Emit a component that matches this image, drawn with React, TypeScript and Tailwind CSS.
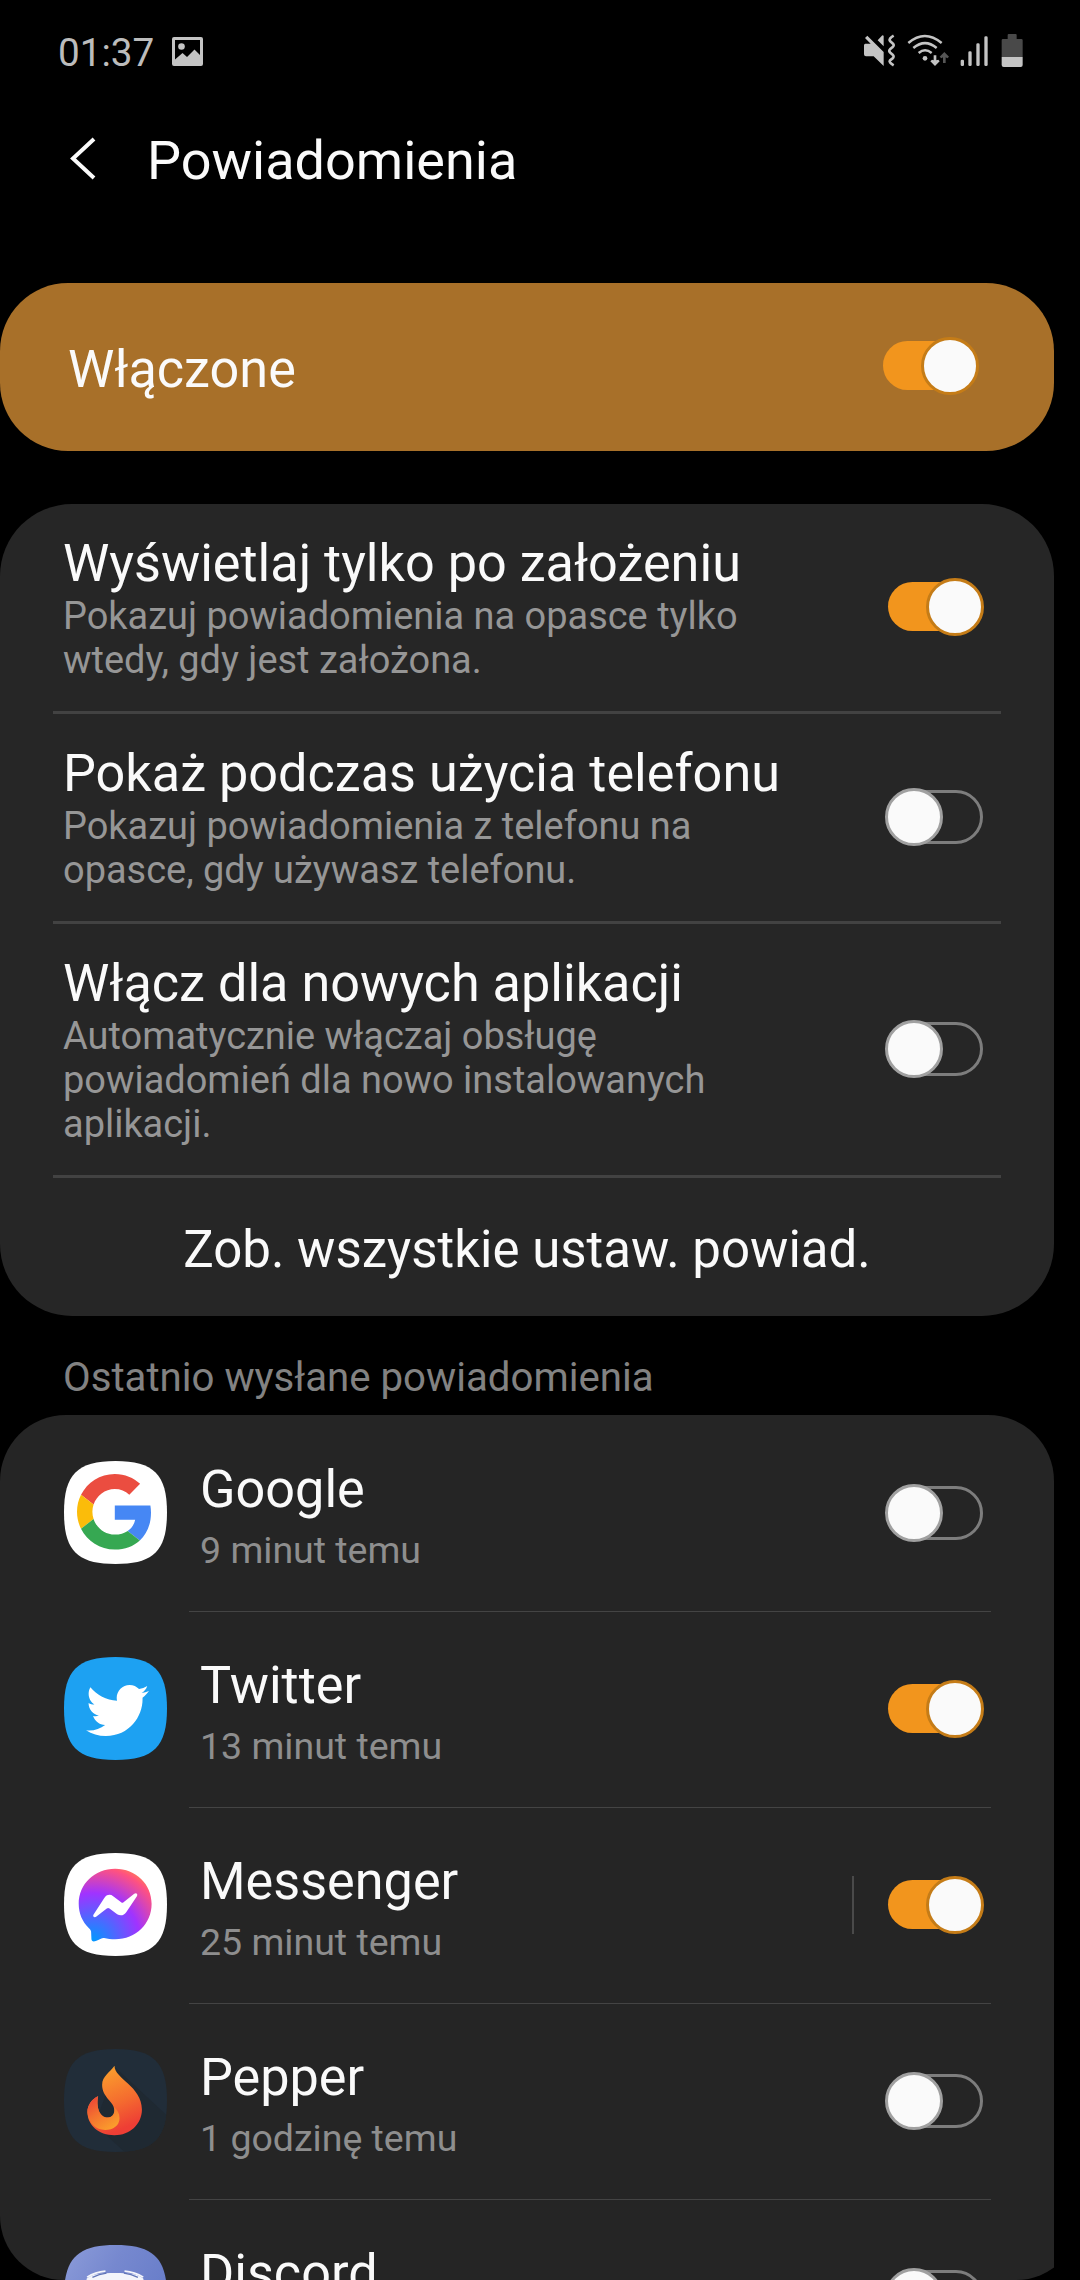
import React from "react";
import { FaTwitter } from "react-icons/fa";

const SQUIRCLE = "M50 0C87 0 100 13 100 50C100 87 87 100 50 100C13 100 0 87 0 50C0 13 13 0 50 0Z";

function Toggle({ on }: { on: boolean }) {
  return on ? (
    <div className="relative h-[58px] w-[96px] shrink-0">
      <div className="absolute left-0 top-1 h-[49px] w-[92px] rounded-full bg-[#f2951d]" />
      <div className="absolute right-0 top-0 size-[58px] rounded-full border-[3px] border-[#c57c17] bg-[#fafafa]" />
    </div>
  ) : (
    <div className="relative mr-px h-[58px] w-[98px] shrink-0">
      <div className="absolute right-0 top-[2px] h-[54px] w-[92px] rounded-full border-[3px] border-[#7d7d7d]" />
      <div className="absolute left-0 top-0 size-[58px] rounded-full border-[3px] border-[#a0a0a0] bg-[#fafafa]" />
    </div>
  );
}

function StatusBar() {
  return (
    <header className="flex h-[104px] items-start pl-[58px] pr-[57px] text-[#bcbcbc]">
      <span className="mt-[30px] w-[96px] text-[38.700px] leading-[46px]">01:37</span>
      <svg className="ml-[18px] mt-[37px] h-[29px] w-[31px]" viewBox="0 0 31 29" fill="#c4c4c4">
        <path
          fillRule="evenodd"
          d="M2 0H29Q31 0 31 2V27Q31 29 29 29H2Q0 29 0 27V2Q0 0 2 0ZM3 3V22.5L10.500 16L15 20L22.500 12.500L28 18V3Z"
        />
        <circle cx="9.500" cy="9.500" r="3.300" />
      </svg>
      <svg className="ml-auto mt-[34px] h-[33px] w-[159px]" viewBox="133 72 477 99" fill="#c4c4c4" stroke="none">
        <path d="M137 101H153L136 84L143 77L192 126V168L162 139H139Q133 139 133 133V106Q133 101 137 101ZM192 77V109L174 91L188 76Z" />
        <path
          d="M222 77Q206 86 211 93L220 101Q225 107 218 112L211 118Q206 123 212 128L219 134Q225 140 218 146L211 151Q206 157 222 166"
          fill="none"
          stroke="#c4c4c4"
          strokeWidth="8"
          strokeLinejoin="round"
        />
        <g fill="none" stroke="#c4c4c4" strokeWidth="7.500" strokeLinecap="butt">
          <path d="M266 99Q315 57 366 99" />
          <path d="M281 114Q316 85 351 114" />
          <path d="M297 129Q316 113 336 129" />
        </g>
        <circle cx="316" cy="145" r="7" />
        <path d="M342 136H350V151L356 149L360 154L346 168L332 154L337 149L342 151Z" />
        <path fill="#555" d="M374 126L388 140L383 145L378 142V159H370V142L365 145L360 140Z" />
        <rect x="423" y="149" width="10" height="19" rx="4" />
        <rect x="446" y="124" width="10" height="44" rx="4" />
        <rect x="470" y="100" width="10" height="68" rx="4" />
        <rect x="494" y="79" width="10" height="89" rx="4" />
        <path fill="#494949" d="M564 75Q564 72 567 72H588Q591 72 591 75V87H605Q609 87 609 91V141H546V91Q546 87 550 87H564Z" />
        <path d="M546 141H609V165Q609 171 603 171H552Q546 171 546 165Z" />
      </svg>
    </header>
  );
}

function GoogleIcon() {
  return (
    <svg className="size-[103px]" viewBox="0 0 103 103">
      <path transform="scale(1.03)" d={SQUIRCLE} fill="#fff" />
      <g transform="translate(13 13) scale(1.575)">
        <path fill="#eb4d40" d="M24 9.500c3.540 0 6.710 1.220 9.210 3.600l6.850-6.850C35.900 2.380 30.470 0 24 0 14.620 0 6.510 5.380 2.560 13.220l7.980 6.190C12.430 13.720 17.740 9.500 24 9.500z" />
        <path fill="#4687f4" d="M46.980 24.550c0-1.570-.15-3.090-.38-4.550H24v9.020h12.940c-.58 2.960-2.260 5.480-4.780 7.180l7.730 6c4.510-4.180 7.090-10.360 7.090-17.650z" />
        <path fill="#fbbc0a" d="M10.530 28.590c-.48-1.450-.76-2.990-.76-4.590s.27-3.140.76-4.590l-7.980-6.190C.92 16.460 0 20.120 0 24c0 3.880.92 7.540 2.560 10.780l7.970-6.190z" />
        <path fill="#36a852" d="M24 48c6.480 0 11.930-2.130 15.890-5.810l-7.730-6c-2.150 1.450-4.920 2.300-8.160 2.300-6.260 0-11.570-4.220-13.470-9.910l-7.980 6.190C6.510 42.620 14.620 48 24 48z" />
      </g>
    </svg>
  );
}

function TwitterIcon() {
  return (
    <div className="relative size-[103px]">
      <svg className="size-[103px]" viewBox="0 0 100 100">
        <path d={SQUIRCLE} fill="#1da1f2" />
      </svg>
      <FaTwitter className="absolute left-[22px] top-[22px] size-[63px] text-white" />
    </div>
  );
}

function MessengerIcon() {
  return (
    <svg className="size-[103px]" viewBox="73 39 308 308">
      <defs>
        <radialGradient id="messenger" cx="0.19" cy="0.99" r="1.09">
          <stop offset="0" stopColor="#0099ff" />
          <stop offset="0.6" stopColor="#a033ff" />
          <stop offset="0.93" stopColor="#ff5280" />
          <stop offset="1" stopColor="#ff7061" />
        </radialGradient>
      </defs>
      <path transform="translate(73 39) scale(3.08)" d={SQUIRCLE} fill="#fff" />
      <path
        fill="url(#messenger)"
        d="M226 86C288 86 335 132 335 191C335 251 288 297 226 297C214 297 203 295 193 293C187 292 180 297 168 302C161 305 155 303 155 296L154 274C153 268 150 266 147 263C128 245 117 220 117 191C117 132 164 86 226 86Z"
      />
      <path
        fill="#fff"
        d="M161 224L193 174C199 164 211 161 220 168L244 186C246 188 249 188 251 186L283 161C289 156 295 162 291 168L259 216C253 226 241 228 232 222L209 205C206 203 204 203 201 205L169 230C164 233 158 229 161 224Z"
      />
    </svg>
  );
}

function PepperIcon() {
  return (
    <svg className="size-[103px]" viewBox="73 627 308 308">
      <defs>
        <linearGradient id="flame" x1="0.35" y1="0" x2="0.7" y2="1">
          <stop offset="0" stopColor="#fba22c" />
          <stop offset="0.55" stopColor="#f46a2f" />
          <stop offset="0.9" stopColor="#ee3e35" />
        </linearGradient>
        <linearGradient id="curl" x1="0.1" y1="0" x2="0.75" y2="1">
          <stop offset="0" stopColor="#e93f38" />
          <stop offset="0.45" stopColor="#f4702f" />
          <stop offset="1" stopColor="#fba02c" />
        </linearGradient>
        <clipPath id="pepperTile">
          <path transform="translate(73 627) scale(3.08)" d={SQUIRCLE} />
        </clipPath>
      </defs>
      <g clipPath="url(#pepperTile)">
        <path d="M73 627H381V935H73Z" fill="#212d39" />
        <path d="M228 684L381 826V935H254L165 852Z" fill="#1f2932" />
      </g>
      <path
        fill="url(#flame)"
        d="M224 677C224 716 306 738 306 808C306 852 270 885 224 885C176 885 143 855 143 815C143 793 158 775 175 768C169 796 177 832 204 832C216 832 226 823 224 808C220 782 187 772 187 734C187 708 211 696 224 677Z"
      />
      <path
        fill="url(#curl)"
        d="M175 768C169 796 177 832 204 832C218 832 227 820 222 800C233 810 239 820 239 834C239 856 220 869 196 869C168 869 147 850 143 817C142 794 158 775 175 768Z"
      />
    </svg>
  );
}

function DiscordIcon() {
  return (
    <svg className="size-[103px]" viewBox="73 1215 308 308">
      <defs>
        <linearGradient id="discord" x1="0" y1="0" x2="1" y2="0.6">
          <stop offset="0" stopColor="#8c9cd9" />
          <stop offset="0.45" stopColor="#7688cf" />
          <stop offset="1" stopColor="#657bc8" />
        </linearGradient>
      </defs>
      <path transform="translate(73 1215) scale(3.08)" d={SQUIRCLE} fill="url(#discord)" />
      <path fill="#f3f5fb" d="M141 1315C160 1301 186 1299 226 1299C266 1299 292 1301 310 1315L330 1420L280 1450H175L125 1420Z" />
      <path d="M142 1311Q166 1296 197 1293M310 1311Q285 1296 254 1293" stroke="#f3f5fb" strokeWidth="5" fill="none" />
      <path d="M158 1312Q178 1302 200 1299M294 1312Q274 1302 252 1299" stroke="#6176b8" strokeWidth="4" fill="none" />
    </svg>
  );
}

const settings = [
  { title: "Wyświetlaj tylko po założeniu", lines: ["Pokazuj powiadomienia na opasce tylko", "wtedy, gdy jest założona."], on: true },
  { title: "Pokaż podczas użycia telefonu", lines: ["Pokazuj powiadomienia z telefonu na", "opasce, gdy używasz telefonu."], on: false },
  { title: "Włącz dla nowych aplikacji", lines: ["Automatycznie włączaj obsługę", "powiadomień dla nowo instalowanych", "aplikacji."], on: false },
];

const apps = [
  { name: "Google", time: "9 minut temu", on: false, Icon: GoogleIcon },
  { name: "Twitter", time: "13 minut temu", on: true, Icon: TwitterIcon },
  { name: "Messenger", time: "25 minut temu", on: true, split: true, Icon: MessengerIcon },
  { name: "Pepper", time: "1 godzinę temu", on: false, Icon: PepperIcon },
  { name: "Discord", on: false, Icon: DiscordIcon },
];

export default function App() {
  return (
    <div className="flex h-[2280px] w-[1080px] flex-col overflow-hidden bg-black font-['Roboto',sans-serif] text-[52.200px] leading-[60px] text-[#fafafa]">
      <StatusBar />
      <div className="flex h-[179px] items-start">
        <svg className="ml-[70px] mt-[33px] h-[43px] w-[26px]" viewBox="0 0 26 43" fill="none" stroke="#fafafa" strokeWidth="4">
          <path d="M24 2L3 21.500L24 41" />
        </svg>
        <h1 className="ml-[51px] mt-[25px] text-[54px] leading-[64px]">Powiadomienia</h1>
      </div>

      <section className="flex h-[168px] w-[1054px] shrink-0 items-start rounded-[68px] bg-[#a87029] pl-[68px] pr-[75px]">
        <span className="mt-[57px] flex-1">Włączone</span>
        <div className="mt-[54px]">
          <Toggle on />
        </div>
      </section>

      <section className="mt-[53px] h-[812px] w-[1054px] shrink-0 rounded-[72px] bg-[#262626]">
        {settings.map((s) => (
          <React.Fragment key={s.title}>
            <div className="flex items-center pb-[29px] pl-[63px] pr-[70px] pt-[30px]">
              <div className="flex-1 whitespace-nowrap">
                <h2>{s.title}</h2>
                <p className="text-[37.950px] leading-[44px] text-[#969696]">
                  {s.lines.map((l) => (
                    <span key={l} className="block">{l}</span>
                  ))}
                </p>
              </div>
              <div className="-mt-[3px]">
                <Toggle on={s.on} />
              </div>
            </div>
            <div className="mx-[53px] h-[3px] bg-[#424242]" />
          </React.Fragment>
        ))}
        <div className="pt-[42px] text-center text-[51px]">Zob. wszystkie ustaw. powiad.</div>
      </section>

      <div className="h-[99px] shrink-0 pl-[63px] pt-[39px] text-[40.200px] leading-[46px] text-[#828282]">
        Ostatnio wysłane powiadomienia
      </div>

      <section className="h-[865px] w-[1054px] shrink-0 overflow-hidden rounded-t-[66px]">
        <div className="h-[865px] w-[1080px] overflow-hidden rounded-b-[64px] bg-[#252525] pt-px">
          {apps.map(({ name, time, on, split, Icon }) => (
            <div key={name} className="flex h-[196px] w-[1054px] pl-[64px]">
              <div className="w-[125px] pt-[45px]">
                <Icon />
              </div>
              <div className="mr-[63px] flex flex-1 items-start border-b border-[#444]">
                <div className="flex-1 pl-[11px] pt-[44px]">
                  <h2>{name}</h2>
                  {time && <p className="mt-2 text-[37.500px] leading-[44px] text-[#8e8e8e]">{time}</p>}
                </div>
                <div className="mr-[7px] mt-[68px] flex">
                  {split && <div className="mr-[34px] h-[58px] w-[2px] bg-[#4a4a4a]" />}
                  <Toggle on={on} />
                </div>
              </div>
            </div>
          ))}
        </div>
      </section>
    </div>
  );
}
